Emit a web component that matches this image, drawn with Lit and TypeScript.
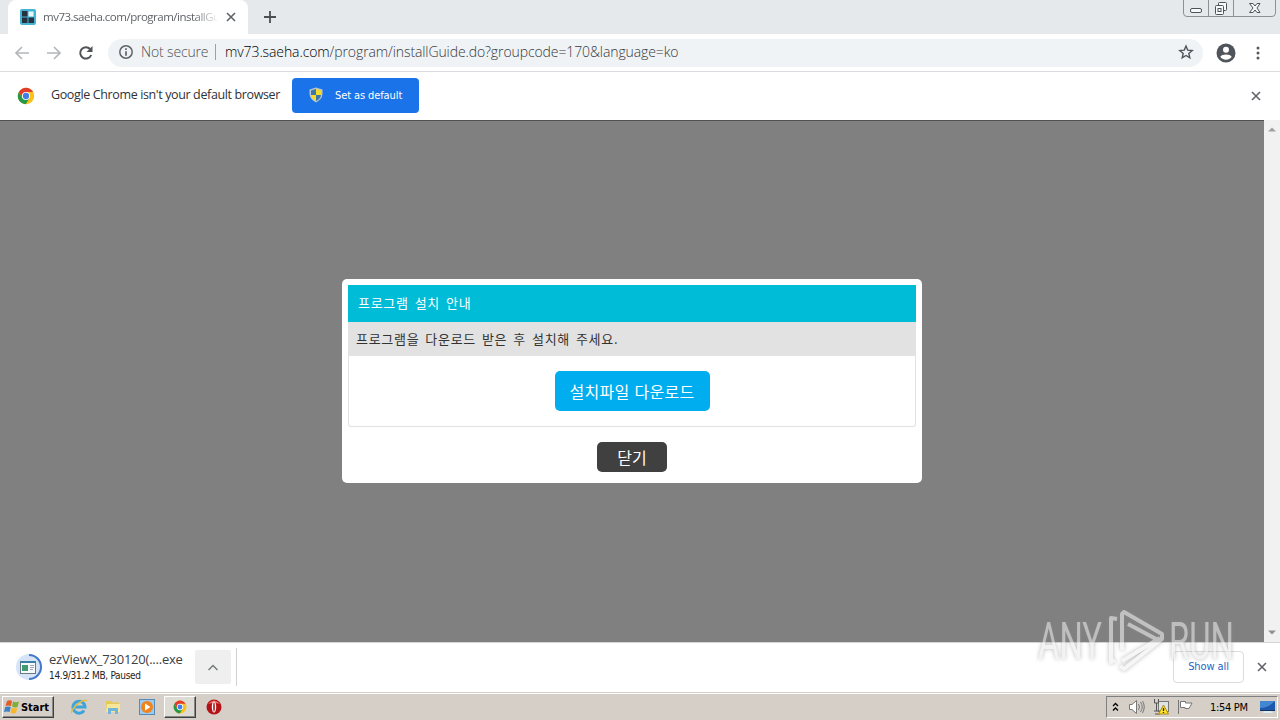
import { LitElement, html, css, svg } from "lit";
import { customElement } from "lit/decorators.js";

const chromeLogo = svg`
  <circle cx="12" cy="12" r="11" fill="#fbc116"/>
  <path d="M2.5 6.500A11 11 0 0 0 11.600 23L16.800 14.500 12 12 7.200 14.700Z" fill="#279847"/>
  <path d="M2.500 6.500A11 11 0 0 1 21.500 6.500H12L7 14Z" fill="#e33b2e"/>
  <circle cx="12" cy="12" r="5.400" fill="#fff"/>
  <circle cx="12" cy="12" r="4.200" fill="#3f7fe8"/>`;

const cross = svg`<path d="M1 1 9 9M9 1 1 9" fill="none" stroke="#5f6368" stroke-width="1.6"/>`;

@customElement("browser-chrome")
export class BrowserChrome extends LitElement {
  static styles = css`
    :host { display: block; font-family: "DejaVu Sans Condensed", "DejaVu Sans", sans-serif; }
    svg { display: block; flex: none; }
    .tabs { height: 34px; background: #e5e9ec; display: flex; align-items: flex-start; }
    .tab { width: 240px; height: 34px; margin-left: 8px; box-sizing: border-box; padding: 0 11px 0 12px;
      background: #fff; border-radius: 8px 8px 0 0; display: flex; align-items: center; }
    .title { width: 175px; margin: 0 8px 0 7px; overflow: hidden; white-space: nowrap; font-size: 11.5px; line-height: 18px;
      letter-spacing: -0.5px; color: #5f6368; font-family: "Open Sans", sans-serif;
      -webkit-mask-image: linear-gradient(90deg, #000 150px, transparent 176px); }
    .plus { margin: 11px 0 0 16px; }
    .controls { margin-left: auto; margin-right: 3px; }
    .bar { height: 37px; border-bottom: 1px solid #dadce0; background: #fff; display: flex; align-items: center; }
    .back { margin-left: 14px; }
    .forward { margin-left: 16px; }
    .reload { margin-left: 16px; }
    .address { width: 1095px; height: 28px; margin-left: 14px; border-radius: 14px; background: #f0f3f5;
      box-sizing: border-box; padding: 0 9px 2px 10px; display: flex; align-items: center; white-space: nowrap;
      font: 300 14px/20px "Open Sans", sans-serif; color: #34383d; }
    .secure { width: 67px; margin-left: 7px; letter-spacing: -0.15px; color: #4c5055; }
    .divider { width: 1px; height: 16px; background: #9aa0a6; margin: 0 9px 0 7px; }
    .url { letter-spacing: -0.1px; }
    .host { color: #000; }
    .star { margin-left: auto; }
    .person { margin-left: 13px; }
    .dots { margin-left: 20px; }
    .info { height: 48px; background: #fff; display: flex; align-items: center; }
    .info .logo { margin-left: 17px; }
    .message { width: 229px; margin: 0 12px 2px 16px; white-space: nowrap; font: 12.5px/18px "Open Sans", sans-serif;
      letter-spacing: -0.37px; color: #303236; }
    .set { width: 127px; height: 35px; margin-bottom: 2px; border-radius: 4px; background: #1a73e8; color: #fff; font-size: 11px;
      letter-spacing: -0.1px; display: flex; align-items: center; box-sizing: border-box; padding-left: 17px; gap: 12px; white-space: nowrap; }
    .dismiss { margin-left: auto; margin-right: 19px; }
  `;
  render() {
    return html`
      <div class="tabs">
        <div class="tab">
          <svg width="16" height="16" viewBox="0 0 16 16"><rect width="16" height="16" rx="2" fill="#43b4d4"/><rect x="2" y="2" width="5.5" height="5.5" fill="#26323f"/><rect x="8.5" y="2.5" width="5" height="5" fill="#e9f7fb"/><rect x="2" y="8.5" width="5.5" height="5.5" fill="#26323f"/><rect x="8.5" y="8.5" width="5.5" height="5.5" fill="#26323f"/></svg>
          <div class="title">mv73.saeha.com/program/installGui</div>
          <svg width="10" height="10" viewBox="0 0 10 10">${cross}</svg>
        </div>
        <svg class="plus" width="12" height="12" viewBox="0 0 12 12"><path d="M6 0V12M0 6H12" stroke="#4b4f53" stroke-width="1.8"/></svg>
        <svg class="controls" width="94" height="18" viewBox="0 0 94 18">
          <path d="M.5 0V13Q.5 16.5 4 16.5H89Q92.5 16.5 92.5 13V0M25.500 0V16M50.500 0V16" fill="none" stroke="#8c9196"/>
          <g fill="#f6f8f9" stroke="#4d5358"><rect x="7.500" y="8.500" width="11" height="4" rx="1.5"/><rect x="35.500" y="2.500" width="8" height="8" rx="1"/><rect x="32.500" y="5.500" width="8" height="9" rx="1"/><rect x="35" y="8.500" width="3" height="3"/>
          <path d="M66.500 3.500H70L72 6 74 3.500H77L74 8 77 12.500H74L72 10 70 12.500H66.500L70 8Z"/></g>
        </svg>
      </div>
      <div class="bar">
        <svg class="back" width="16" height="16" viewBox="0 0 16 16"><path d="M15 8H2M8 2 2 8 8 14" fill="none" stroke="#b5b7ba" stroke-width="1.7"/></svg>
        <svg class="forward" width="16" height="16" viewBox="0 0 16 16"><path d="M1 8H14M8 2 14 8 8 14" fill="none" stroke="#b5b7ba" stroke-width="1.7"/></svg>
        <svg class="reload" width="16" height="16" viewBox="0 0 16 16"><path d="M13.200 10A5.700 5.700 0 1 1 12.100 4" fill="none" stroke="#505459" stroke-width="2"/><path d="M14.500 1V7H8.500Z" fill="#505459"/></svg>
        <div class="address">
          <svg width="16" height="16" viewBox="0 0 16 16"><circle cx="8" cy="8" r="6.200" fill="none" stroke="#5f6368" stroke-width="1.500"/><path d="M8 4.300V6M8 7.200V11.700" stroke="#5f6368" stroke-width="1.700"/></svg>
          <span class="secure">Not secure</span><span class="divider"></span>
          <span class="url"><span class="host">mv73.saeha.com</span>/program/installGuide.do?groupcode=170&amp;language=ko</span>
          <svg class="star" width="16" height="16" viewBox="0 0 16 16"><path d="M8 2 9.700 6.100 14.200 6.500 10.800 9.400 11.800 13.800 8 11.500 4.200 13.800 5.200 9.400 1.800 6.500 6.300 6.100Z" fill="none" stroke="#505459" stroke-width="1.400"/></svg>
        </div>
        <svg class="person" width="20" height="20" viewBox="0 0 20 20"><circle cx="10" cy="10" r="9.500" fill="#50555b"/><circle cx="10" cy="6.800" r="3" fill="#fff"/><path d="M4.300 13.500C6 10.800 14 10.800 15.700 13.500 14 17.700 6 17.700 4.300 13.500Z" fill="#fff"/></svg>
        <svg class="dots" width="4" height="14" viewBox="0 0 4 14"><g fill="#55595e"><circle cx="2" cy="2" r="1.500"/><circle cx="2" cy="7" r="1.500"/><circle cx="2" cy="12" r="1.500"/></g></svg>
      </div>
      <div class="info">
        <svg class="logo" width="18" height="18" viewBox="0 0 24 24">${chromeLogo}</svg>
        <div class="message">Google Chrome isn't your default browser</div>
        <div class="set"><svg width="14" height="16" viewBox="0 0 14 16"><path d="M7 .5 13.500 2.500V7Q13 12.500 7 15.500 1 12.500.5 7V2.500Z" fill="#b9c5ca"/><path d="M7 2V8H2V3.500ZM7 8H12Q11.500 12 7 14Z" fill="#3d77a9"/><path d="M7 2 12 3.500V8H7ZM7 8V14Q2.500 12 2 8Z" fill="#f5dc2c"/></svg>Set as default</div>
        <svg class="dismiss" width="10" height="10" viewBox="0 0 10 10">${cross}</svg>
      </div>`;
  }
}

@customElement("install-page")
export class InstallPage extends LitElement {
  static styles = css`
    :host { display: flex; height: 522px; background: #808080; font-family: "Noto Sans CJK KR", sans-serif; }
    .canvas { flex: 1; display: flex; align-items: center; justify-content: center; box-shadow: inset 0 1px 0 #525252; }
    .dialog { width: 580px; height: 204px; box-sizing: border-box; padding: 6px; background: #fff;
      border-radius: 5px; display: flex; flex-direction: column; align-items: center; white-space: nowrap; }
    .head { width: 568px; height: 37px; box-sizing: border-box; padding-left: 10px; background: #00bcd7; color: #fff;
      font-size: 13px; line-height: 36px; letter-spacing: 0.7px; word-spacing: 2.4px; }
    .panel { width: 568px; height: 105px; box-sizing: border-box; border: 1px solid #e2e2e2; border-top: 0;
      border-radius: 0 0 3px 3px; display: flex; flex-direction: column; align-items: center; }
    .note { width: 566px; height: 34px; box-sizing: border-box; padding-left: 7px; background: #e2e2e2; color: #333;
      font-size: 13px; line-height: 33px; letter-spacing: 0.7px; word-spacing: 2.4px; }
    .download { width: 155px; height: 40px; margin-top: 15px; border-radius: 5px; background: #00aeef; color: #fff;
      font-size: 16px; line-height: 40px; text-align: center; letter-spacing: 0.3px; word-spacing: 1px; }
    .close { width: 70px; height: 30px; margin-top: 15px; border-radius: 5px; background: #404040; color: #fff;
      font-size: 16px; line-height: 30px; text-align: center; }
    .scroll { width: 16px; background: #f1f1f1; display: flex; flex-direction: column; justify-content: space-between; align-items: center; padding: 7px 0 7px; box-sizing: border-box; }
  `;
  render() {
    return html`
      <div class="canvas"><div class="dialog">
        <div class="head">프로그램 설치 안내</div>
        <div class="panel"><div class="note">프로그램을 다운로드 받은 후 설치해 주세요.</div><div class="download">설치파일 다운로드</div></div>
        <div class="close">닫기</div>
      </div></div>
      <div class="scroll">
        <svg width="8" height="5" viewBox="0 0 8 5"><path d="M0 4.500 4 .5 8 4.500Z" fill="#a0a0a0"/></svg>
        <svg width="8" height="5" viewBox="0 0 8 5"><path d="M0 .5 4 4.500 8 .5Z" fill="#909090"/></svg>
      </div>`;
  }
}

@customElement("download-shelf")
export class DownloadShelf extends LitElement {
  static styles = css`
    :host { display: flex; align-items: center; height: 50px; box-sizing: border-box; border-top: 1px solid #d2d4d6;
      padding-bottom: 1px; background: #fff; font-family: "DejaVu Sans Condensed", "DejaVu Sans", sans-serif; }
    svg { display: block; flex: none; }
    .progress { margin-left: 16px; }
    .labels { width: 140px; margin: 0 6px; white-space: nowrap; }
    .file { font: 13px/17px "Open Sans", sans-serif; color: #3c4043; letter-spacing: -0.22px; }
    .state { font-size: 10px; line-height: 16px; color: #222; letter-spacing: -0.3px; }
    .menu { width: 36px; height: 34px; background: #efefef; border-radius: 2px; display: flex; align-items: center; justify-content: center; }
    .rule { width: 1px; height: 38px; margin-left: 5px; background: #d0d2d4; }
    .all { width: 71px; height: 32px; box-sizing: border-box; border: 1px solid #dadce0; border-radius: 4px;
      color: #2466c4; font-size: 11px; line-height: 30px; text-align: center; margin-left: auto; letter-spacing: -0.1px; }
    .x { margin: 0 13px; }
  `;
  render() {
    return html`
      <svg class="progress" width="27" height="28" viewBox="0 0 27 28"><circle cx="13" cy="14" r="13" fill="#d7e3f7"/><path d="M13 2A12 12 0 0 1 13 26" fill="none" stroke="#4278c9" stroke-width="2"/><rect x="4.500" y="8.500" width="15" height="12" fill="#f7fafb" stroke="#687b85"/><path d="M4 9H20" stroke="#3b80a6" stroke-width="2"/><rect x="6" y="12" width="6" height="6" fill="#419b72"/><path d="M14 12.500H18M14 14.500H18M14 16.500H17" stroke="#9cabb3"/></svg>
      <div class="labels"><div class="file">ezViewX_730120(....exe</div><div class="state">14.9/31.2 MB, Paused</div></div>
      <div class="menu"><svg width="10" height="7" viewBox="0 0 10 7"><path d="M.5 6 5 1.500 9.500 6" fill="none" stroke="#76797c" stroke-width="1.500"/></svg></div>
      <div class="rule"></div>
      <div class="all">Show all</div>
      <svg class="x" width="10" height="10" viewBox="0 0 10 10">${cross}</svg>`;
  }
}

@customElement("task-bar")
export class TaskBar extends LitElement {
  static styles = css`
    :host { display: flex; align-items: center; height: 28px; box-sizing: border-box; border-top: 1px solid #d4d0c8;
      box-shadow: inset 0 1px #fff; padding-top: 1px; background: #d5cfc7; font-family: "DejaVu Sans Condensed", "DejaVu Sans", sans-serif; }
    svg { display: block; flex: none; }
    .start, .active { box-sizing: border-box; height: 22px; border: 1px solid; border-color: #fff #404040 #404040 #fff;
      box-shadow: inset -1px -1px #888; display: flex; align-items: center; }
    .start { width: 52px; margin-left: 2px; padding-left: 1px; gap: 1px; color: #000; font-size: 11px; font-weight: 700; letter-spacing: -0.02px; }
    .ie { margin-left: 16px; }
    .explorer { margin-left: 17px; }
    .media { margin-left: 18px; }
    .active { width: 32px; margin-left: 9px; background: #dedad4; justify-content: center; }
    .opera { margin-left: 10px; }
    .tray { width: 172px; height: 22px; margin-left: auto; margin-right: 2px; box-sizing: border-box; border: 1px solid;
      border-color: #808080 #fff #fff #808080; display: flex; align-items: center; padding-left: 5px; }
    .sound { margin-left: 10px; }
    .net { margin-left: 8px; }
    .flag { margin-left: 8px; }
    .clock { width: 40px; margin-left: 17px; white-space: nowrap; font-size: 11px; letter-spacing: -0.3px; color: #000; }
    .desk { margin-left: 10px; }
  `;
  render() {
    return html`
      <div class="start"><svg width="16" height="16" viewBox="0 0 16 16"><path d="M3 2Q6 .5 8 2L7 7Q4 6 1.500 7Z" fill="#e25b28"/><path d="M9 2.500Q12 4 15 2.500L13.500 8Q11 9 8 7.500Z" fill="#7faf38"/><path d="M1.200 8Q4 7 6.800 8L5.500 13Q3 12 0 13Z" fill="#3c83c5"/><path d="M7.700 8.500Q10 10 13.200 9L12 14Q9 15 6.400 13.500Z" fill="#f5b928"/></svg>Start</div>
      <svg class="ie" width="18" height="18" viewBox="0 0 18 18"><path d="M14 12.500A6 6 0 1 1 15 9H5" fill="none" stroke="#3da4dc" stroke-width="3"/><path d="M2 15C-1 12 14-1 17 3" fill="none" stroke="#e6bc42" stroke-width="1.500"/></svg>
      <svg class="explorer" width="16" height="16" viewBox="0 0 16 16"><path d="M1 2H6L7 3.500H14V13H1Z" fill="#e8c854"/><path d="M2 5H15V13H1Z" fill="#f5e69a"/><path d="M3 15V9H13V15H10V12H6V15Z" fill="#71b5dc"/></svg>
      <svg class="media" width="16" height="16" viewBox="0 0 16 16"><rect x=".5" y=".5" width="15" height="15" fill="#9ecaed" stroke="#578bb5"/><circle cx="8" cy="8" r="6" fill="#ef831e"/><path d="M6 4.500 11.500 8 6 11.500Z" fill="#fff"/></svg>
      <div class="active"><svg width="14" height="14" viewBox="0 0 24 24">${chromeLogo}</svg></div>
      <svg class="opera" width="16" height="16" viewBox="0 0 16 16"><circle cx="8" cy="8" r="7.500" fill="#b51218"/><path d="M2 5Q8-2 14 5 8 3 2 5Z" fill="#e66f6c"/><ellipse cx="8" cy="8" rx="2.200" ry="5.500" fill="#fff"/><ellipse cx="8" cy="8" rx="1" ry="4.800" fill="#c43c3c"/></svg>
      <div class="tray">
        <svg width="7" height="10" viewBox="0 0 7 10"><path d="M1 4 3.500 1.500 6 4M1 8.500 3.500 6 6 8.500" fill="none" stroke="#000" stroke-width="1.300"/></svg>
        <svg class="sound" width="16" height="16" viewBox="0 0 16 16"><path d="M.5 5.500H3L7.500 1.500V14.500L3 10.500H.5Z" fill="#fff" stroke="#777"/><path d="M9.500 5Q11.500 8 9.500 11M11.500 3Q15 8 11.500 13M13.500 2Q17 8 13.500 14" fill="none" stroke="#777"/></svg>
        <svg class="net" width="16" height="16" viewBox="0 0 16 16"><rect x="5.500" y="2.500" width="10" height="10" fill="#dfe4e2" stroke="#777"/><path d="M1.500 0V4H5.500V0M3.500 4V12M1 12H7V15H2" fill="none" stroke="#555"/><path d="M10.500 6 15.500 15H5.500Z" fill="#ffe229" stroke="#ae8a15"/><path d="M10.500 9V12M10.500 13V14" stroke="#222" stroke-width="1.300"/></svg>
        <svg class="flag" width="16" height="16" viewBox="0 0 16 16"><path d="M1.500 1V15M3.500 2.500H8.500V4H15L12 9.500H8V8.500H3.500Z" fill="#fff" stroke="#777"/></svg>
        <span class="clock">1:54 PM</span>
        <svg class="desk" width="15" height="14" viewBox="0 0 15 14"><path d="M0 1H15V10H0Z" fill="#1d58af"/><path d="M0 1H15Q8 8 0 8Z" fill="#4287d2"/><path d="M0 10H15V11H0Z" fill="#16355e"/><path d="M4 11H11L13 13H3Z" fill="#d9edf7"/></svg>
      </div>`;
  }
}

@customElement("app-root")
export class AppRoot extends LitElement {
  static styles = css`
    :host { display: block; position: relative; width: 1280px; height: 720px; overflow: hidden; }
    .mark { position: absolute; left: 1030px; top: 600px; opacity: 0.58; pointer-events: none; filter: drop-shadow(0 0 2px #888); }
    .word { font: 400 51px "Roboto", sans-serif; fill: #ececec; }
  `;
  render() {
    return html`
      <browser-chrome></browser-chrome>
      <install-page></install-page>
      <download-shelf></download-shelf>
      <task-bar></task-bar>
      <svg class="mark" width="210" height="80" viewBox="0 0 210 80">
        <text class="word" x="8" y="59" textLength="64" lengthAdjust="spacingAndGlyphs">ANY</text>
        <text class="word" x="139" y="59" textLength="65" lengthAdjust="spacingAndGlyphs">RUN</text>
        <path d="M87 19 81 18V62L85 60M92 50V14L94 12 132 34V39L94 69 90 66M98 24 128 40M92 61 130 38" fill="none" stroke="#f0f0f0" stroke-width="4" stroke-linejoin="round"/>
      </svg>`;
  }
}
